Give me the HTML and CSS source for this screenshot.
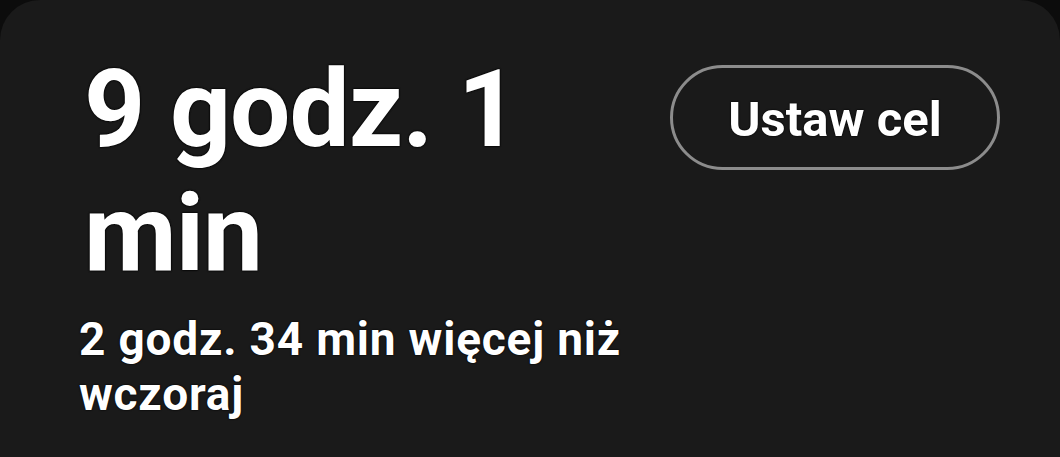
FILE: index.html
```html
<!DOCTYPE html>
<html lang="pl">
<head>
<meta charset="UTF-8">
<meta name="viewport" content="width=device-width, initial-scale=1.0">
<title>Czas przed ekranem</title>
<link rel="stylesheet" href="styles.css">
</head>
<body>

<div class="card">
    <div class="summary">
        <h1 class="total">9 godz. 1 min</h1>
        <p class="compare">2 godz. 34 min więcej niż wczoraj</p>
    </div>
    <button class="goal">Ustaw cel</button>
</div>

</body>
</html>
```

FILE: styles.css
```css
body {
    margin: 0;
    background-color: #0c0c0c;
    font-family: Roboto, "Noto Sans", Arial, sans-serif;
    color: #ffffff;
}
.card {
    display: flex;
    justify-content: space-between;
    align-items: flex-start;
    height: 457px;
    box-sizing: border-box;
    padding: 48px 60px 0 79px;
    background-color: #1a1a1a;
    border-radius: 40px 40px 0 0;
}
.summary {
    width: 580px;
}
.total {
    margin: 0 0 0 5px;
    font-size: 107px;
    line-height: 124px;
    font-weight: 700;
    letter-spacing: -1px;
    text-shadow: 0 0 2px #000, 0 0 2px #000, 0 0 1px #000;
}
.compare {
    margin: 16px 0 0 0;
    font-size: 46px;
    line-height: 55px;
    font-weight: 700;
    letter-spacing: 0.8px;
    text-shadow: 0 0 2px #000, 0 0 1px #000;
}
.goal {
    margin-top: 17px;
    width: 330px;
    height: 105px;
    padding-top: 4px;
    border: 3px solid #8c8c8c;
    border-radius: 53px;
    background-color: transparent;
    color: #ffffff;
    font-family: Roboto, "Noto Sans", Arial, sans-serif;
    font-size: 49px;
    font-weight: 700;
    text-shadow: 0 0 2px #000, 0 0 1px #000;
    cursor: pointer;
}
```
